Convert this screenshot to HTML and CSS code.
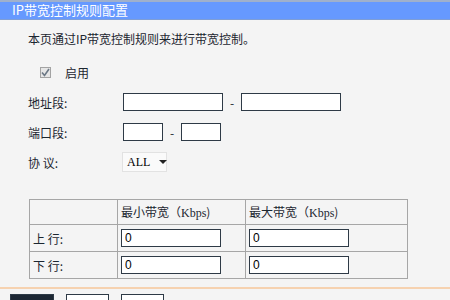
FILE: index.html
```html
<!DOCTYPE html>
<html lang="zh-CN">
<head>
    <meta charset="UTF-8">
    <title>IP带宽控制规则配置</title>
    <link rel="stylesheet" href="styles.css">
</head>
<body>

<div class="title">IP带宽控制规则配置</div>

<p class="intro">本页通过IP带宽控制规则来进行带宽控制。</p>

<div class="form">
    <div class="row check-row">
        <span class="checkbox">
            <svg width="9" height="9" viewBox="0 0 9 9"><path d="M1 4.5 L3.5 7.5 L8 1" fill="none" stroke="#6b7785" stroke-width="1.6"/></svg>
        </span>
        <span>启用</span>
    </div>
    <div class="row">
        <label class="label">地址段:</label>
        <input class="text wide" type="text">
        <span class="dash">-</span>
        <input class="text wide" type="text">
    </div>
    <div class="row">
        <label class="label">端口段:</label>
        <input class="text short" type="text">
        <span class="dash">-</span>
        <input class="text short" type="text">
    </div>
    <div class="row">
        <label class="label">协 议:</label>
        <div class="select">ALL <span class="arrow"></span></div>
    </div>
</div>

<table class="bw">
    <tr class="head">
        <td class="c1"></td>
        <td class="c2">最小带宽（<span class="latin">Kbps</span>)</td>
        <td class="c3">最大带宽（<span class="latin">Kbps</span>)</td>
    </tr>
    <tr>
        <td>上 行:</td>
        <td><input class="text cell" type="text" value="0"></td>
        <td><input class="text cell" type="text" value="0"></td>
    </tr>
    <tr>
        <td>下 行:</td>
        <td><input class="text cell" type="text" value="0"></td>
        <td><input class="text cell" type="text" value="0"></td>
    </tr>
</table>

<div class="footer">
    <button class="btn dark"></button>
    <button class="btn"></button>
    <button class="btn"></button>
</div>

</body>
</html>
```

FILE: styles.css
```css
body {
    margin: 0;
    background-color: #f4f4f4;
    font-family: "Noto Sans CJK SC", "Liberation Sans", sans-serif;
    font-size: 12px;
    color: #1c2630;
    overflow: hidden;
}
.title {
    height: 17px;
    border-top: 2px solid #9fb0cc;
    border-bottom: 1px solid #7f9ed6;
    background-color: #6699ff;
    color: #fff;
    padding-left: 12px;
    font-size: 13px;
    line-height: 15px;
}
.intro {
    margin: 9px 0 0 28px;
    line-height: 20px;
}
.form {
    margin-top: 8px;
}
.row {
    display: flex;
    align-items: center;
    height: 30px;
    padding-left: 28px;
}
.check-row {
    padding-left: 40px;
}
.checkbox {
    display: flex;
    align-items: center;
    justify-content: center;
    width: 9px;
    height: 9px;
    border: 1px solid #a3a3a3;
    background-color: #e6e6e6;
    margin-right: 14px;
}
.label {
    width: 95px;
}
.text {
    box-sizing: border-box;
    height: 18px;
    border: 1px solid #2e3a46;
    background: #fff;
    padding: 0 3px;
    font-family: "Liberation Sans", sans-serif;
    font-size: 12px;
    color: #000;
}
.wide {
    width: 100px;
}
.short {
    width: 40px;
}
.dash {
    width: 18px;
    text-align: center;
}
.select {
    display: flex;
    align-items: center;
    box-sizing: border-box;
    width: 45px;
    height: 20px;
    margin-left: -1px;
    padding-left: 4px;
    border: 1px solid #e2e2e2;
    background: #fafafa;
    font-family: "Liberation Serif", serif;
    font-size: 12px;
    color: #000;
}
.arrow {
    margin-left: 9px;
    border-left: 4px solid transparent;
    border-right: 4px solid transparent;
    border-top: 4px solid #222;
}
.bw {
    margin: 22px 0 0 29px;
    border-collapse: collapse;
    border: 1px solid #a6a6a6;
}
.bw td {
    border: 1px solid #a6a6a6;
    padding: 0 3px;
    height: 26px;
}
.bw tr.head td {
    height: 24px;
}
.c1 {
    width: 81px;
}
.c2 {
    width: 121px;
}
.c3 {
    width: 155px;
}
.latin {
    font-family: "Liberation Serif", serif;
}
.cell {
    display: block;
    width: 100px;
}
.footer {
    margin-top: 8px;
    border-top: 2px solid #f6d2b0;
    padding: 5px 0 0 10px;
    display: flex;
    gap: 12px;
}
.btn {
    width: 43px;
    height: 22px;
    border: 1px solid #2e3a46;
    background: #fff;
}
.btn.dark {
    width: 44px;
    background: #1d2733;
}
```
